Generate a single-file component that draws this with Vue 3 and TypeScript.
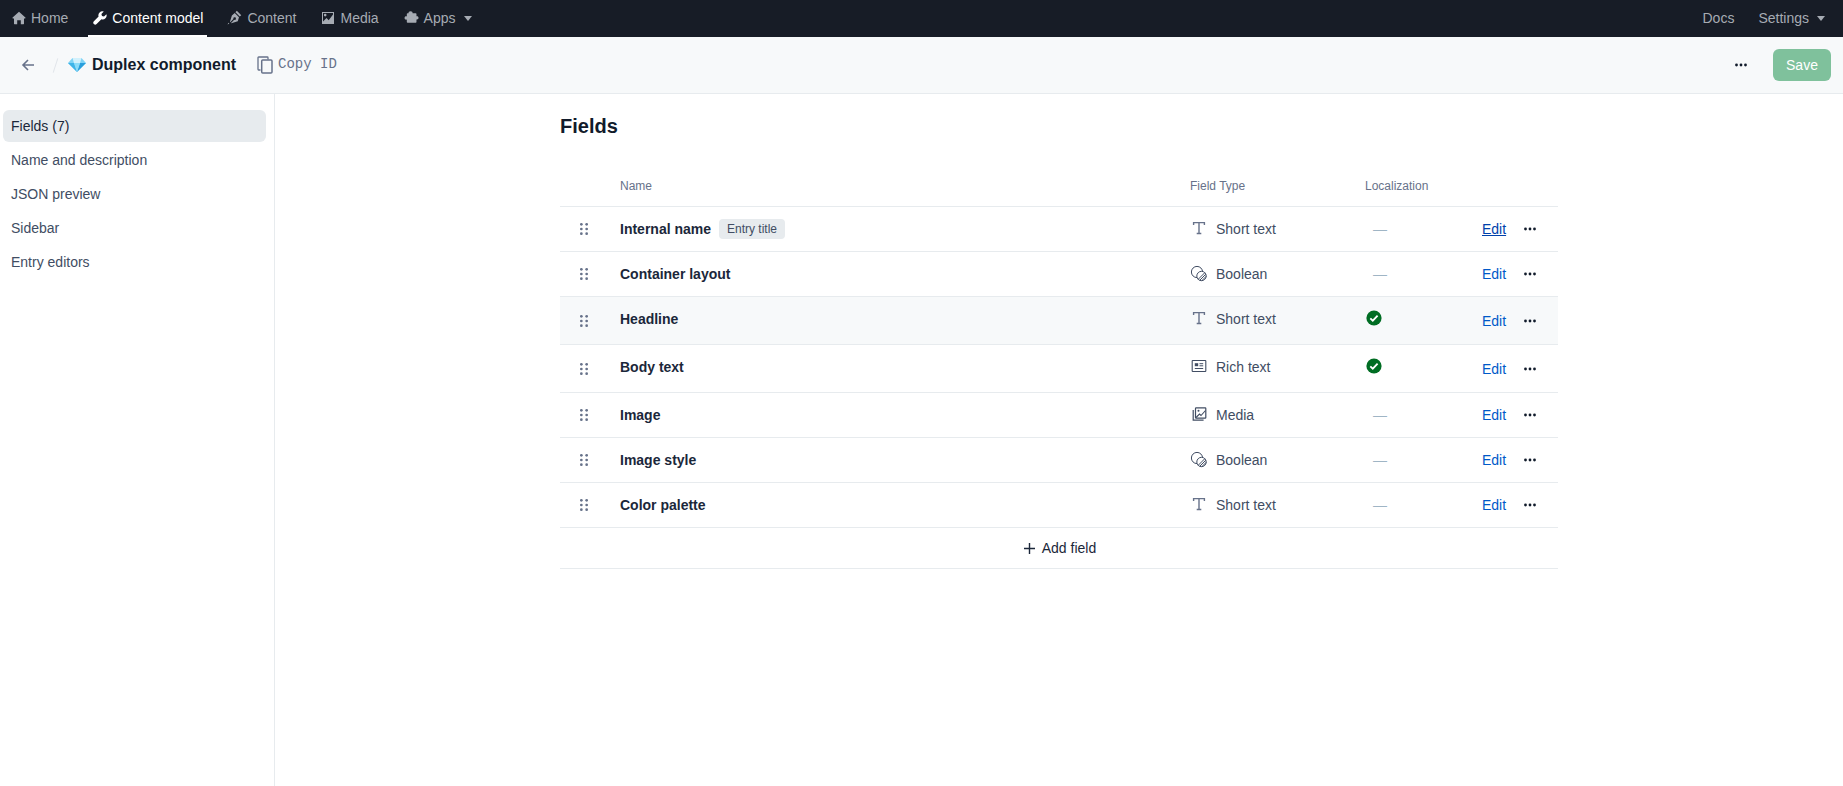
<script setup lang="ts">
type FieldKind = 'text' | 'bool' | 'rich' | 'media'
interface Field { name: string; kind: FieldKind; type: string; localized: boolean; tag?: string; link?: boolean }

const side: string[] = ['Fields (7)', 'Name and description', 'JSON preview', 'Sidebar', 'Entry editors']
const fields: Field[] = [
  { name: 'Internal name', kind: 'text', type: 'Short text', localized: false, tag: 'Entry title', link: true },
  { name: 'Container layout', kind: 'bool', type: 'Boolean', localized: false },
  { name: 'Headline', kind: 'text', type: 'Short text', localized: true },
  { name: 'Body text', kind: 'rich', type: 'Rich text', localized: true },
  { name: 'Image', kind: 'media', type: 'Media', localized: false },
  { name: 'Image style', kind: 'bool', type: 'Boolean', localized: false },
  { name: 'Color palette', kind: 'text', type: 'Short text', localized: false },
]
</script>

<template>
  <div class="app">
    <nav class="topnav">
      <a class="nav-item">
        <svg class="nav-ic" viewBox="0 0 14 14"><path d="M7 .8 .6 6.6c-.3.3-.1.8.3.8H2v5.4c0 .3.2.5.5.5h2.700V9.200h3.600v4.100h2.700c.3 0 .5-.2.5-.5V7.400h1.100c.4 0 .6-.5.3-.8z" /></svg>
        Home
      </a>
      <a class="nav-item active">
        <svg class="nav-ic" viewBox="0 0 14 14"><path d="M13.400 3.200 11 5.600 9 5 8.400 3 10.800.6a4 4 0 0 0-5.200 5L.9 10.300a1.900 1.900 0 0 0 2.700 2.700l4.800-4.700a4 4 0 0 0 5-5.100z" /></svg>
        Content model
      </a>
      <a class="nav-item">
        <svg class="nav-ic wide" viewBox="0 0 16 16"><path d="M10.500.8 15.200 5.500 13.600 7 9 2.400zM8.200 3.200l4.600 4.600-1.300 4.300-6.900 2.100-.3-.3 3.400-3.400a1.400 1.400 0 1 0-.9-.9l-3.400 3.400-.3-.3 2.100-6.900zM1.500 13.500l-.9 1.900 1.900-.9z" /></svg>
        Content
      </a>
      <a class="nav-item">
        <svg class="nav-ic" viewBox="0 0 14 14"><path fill-rule="evenodd" d="M1 1h12v12H1zm1 1v8.600L5.500 7l2.200 2.200L12 3.500V2zm2.200.8a1.300 1.300 0 1 1 0 2.600 1.300 1.300 0 0 1 0-2.600z" /></svg>
        Media
      </a>
      <a class="nav-item">
        <svg class="nav-ic wide" viewBox="0 0 16 16"><path d="M7 1.200c1.500 0 2.300 1 2.200 2.300h3.300c.5 0 .8.300.8.800v2.400c1.300-.4 2.200.4 2.200 1.600s-.9 2-2.200 1.700v2.700c0 .5-.3.800-.8.800H3.800c-.5 0-.8-.3-.8-.8V10.200C1.600 10.600.6 9.800.6 8.500S1.600 6.400 3 6.800V4.300c0-.5.300-.8.800-.8h1C4.700 2.200 5.500 1.200 7 1.200z" /></svg>
        Apps
        <i class="caret"></i>
      </a>
      <div class="nav-right">
        <a class="nav-item">Docs</a>
        <a class="nav-item">Settings <i class="caret"></i></a>
      </div>
    </nav>

    <header class="bar">
      <button class="back" aria-label="Back">
        <svg viewBox="0 0 14 14" width="14" height="14"><path d="M13 7H2M7 2 2 7l5 5" fill="none" stroke="#67728a" stroke-width="1.600" /></svg>
      </button>
      <span class="slash"></span>
      <svg class="gem" viewBox="0 0 18 14" width="18" height="14">
        <path d="M4.500 0h9L18 5 9 14 0 5z" fill="#7fd3f5" />
        <path d="M4.500 0 6 5h6l1.500-5z" fill="#d2f1fc" />
        <path d="M0 5h6l3 9z" fill="#3eb4e8" />
        <path d="M18 5h-6L9 14z" fill="#2a9fdc" />
        <path d="M6 5h6l-3 9z" fill="#8bdcf9" />
      </svg>
      <h1 class="title">Duplex component</h1>
      <span class="copy">
        <svg viewBox="0 0 16 18" width="16" height="18"><path d="M3.500 14H1.700a.8.8 0 0 1-.7-.8V1.800c0-.4.300-.8.700-.8h8.600c.4 0 .7.400.7.800V3.500" fill="none" stroke="#67728a" stroke-width="1.300" /><rect x="4.700" y="4" width="10.300" height="13" rx="1" fill="none" stroke="#67728a" stroke-width="1.500" /></svg>
        <code>Copy ID</code>
      </span>
      <span class="bar-right">
        <svg class="dots" viewBox="0 0 12 4" width="12" height="4"><circle cx="1.500" cy="2" r="1.400" /><circle cx="6" cy="2" r="1.400" /><circle cx="10.500" cy="2" r="1.400" /></svg>
        <button class="save">Save</button>
      </span>
    </header>

    <div class="body">
      <aside class="side">
        <a v-for="(s, i) in side" :key="s" class="side-item" :class="{ on: i === 0 }">{{ s }}</a>
      </aside>
      <main class="main">
        <h2 class="heading">Fields</h2>
        <div class="table">
          <div class="row head">
            <span></span><span>Name</span><span>Field Type</span><span>Localization</span><span></span>
          </div>
          <div v-for="(f, i) in fields" :key="f.name" class="row" :class="{ tall: f.localized, hover: i === 2 }">
            <span class="drag">
              <svg viewBox="0 0 8 12" width="8" height="12" fill="#67728a"><circle cx="1.350" cy="1.350" r="1.350" /><circle cx="6.650" cy="1.350" r="1.350" /><circle cx="1.350" cy="6" r="1.350" /><circle cx="6.650" cy="6" r="1.350" /><circle cx="1.350" cy="10.650" r="1.350" /><circle cx="6.650" cy="10.650" r="1.350" /></svg>
            </span>
            <span class="name">
              <b>{{ f.name }}</b>
              <em v-if="f.tag" class="tag">{{ f.tag }}</em>
            </span>
            <span class="type">
              <svg class="type-ic" viewBox="0 0 18 18" width="18" height="18">
                <path v-if="f.kind === 'text'" d="M3.600 6V3.600h10.800V6M9 3.600v10.800M6.700 14.500h4.600" fill="none" stroke="#67728a" stroke-width="1.400" />
                <g v-else-if="f.kind === 'bool'" fill="none" stroke="#414d63" stroke-width="1">
                  <circle cx="7" cy="8" r="5.600" />
                  <circle cx="11.500" cy="12" r="4.700" fill="#fff" />
                  <path d="M8.200 15.300l6.600-6.600M9.700 16.300l6.100-6.100M11.800 16.700l4.400-4.400" />
                </g>
                <g v-else-if="f.kind === 'rich'" fill="none" stroke="#414d63">
                  <rect x="2.200" y="3.500" width="13.600" height="11" rx=".6" stroke-width="1.100" />
                  <rect x="4.800" y="6.200" width="3.400" height="3" fill="#414d63" stroke="none" />
                  <path d="M4.800 11.500h8.400M9.500 6.700h3.700M9.500 8.800h3.700" stroke-width="1" />
                </g>
                <g v-else fill="none" stroke="#414d63" stroke-width="1.200">
                  <rect x="5.500" y="2.900" width="10.300" height="10.300" rx=".6" />
                  <path d="M3.200 5v10.100h10.400" />
                  <path d="M6 12.500l3.500-3.500 1.500 1.500 4.500-5" stroke-width="1.100" />
                  <circle cx="8.500" cy="5.700" r="1" fill="#414d63" stroke="none" />
                </g>
              </svg>
              {{ f.type }}
            </span>
            <span class="loc">
              <svg v-if="f.localized" class="check" viewBox="0 0 16 16" width="16" height="16"><circle cx="8" cy="8" r="7.600" fill="#006d23" /><path d="M4.300 8.300l2.500 2.400 4.800-5" fill="none" stroke="#fff" stroke-width="1.800" /></svg>
              <span v-else class="dash">—</span>
            </span>
            <span class="actions">
              <a class="edit" :class="{ under: f.link }">Edit</a>
              <svg class="dots" viewBox="0 0 12 4" width="12" height="4"><circle cx="1.500" cy="2" r="1.400" /><circle cx="6" cy="2" r="1.400" /><circle cx="10.500" cy="2" r="1.400" /></svg>
            </span>
          </div>
          <div class="add">
            <svg viewBox="0 0 11 11" width="11" height="11"><path d="M5.500 0v11M0 5.500h11" stroke="#1b273a" stroke-width="1.400" /></svg>
            Add field
          </div>
        </div>
      </main>
    </div>
  </div>
</template>

<style>
html, body { margin: 0; background: #fff; }
</style>

<style scoped>
.app { height: 786px; overflow: hidden; display: flex; flex-direction: column; font: 14px/20px "Liberation Sans", Arial, sans-serif; color: #414d63; }
.topnav { flex: 0 0 37px; box-sizing: border-box; height: 37px; background: #171c26; display: flex; gap: 15px; padding: 0 13px 0 7px; }
.nav-item { display: flex; align-items: center; gap: 5px; padding: 0 5px; height: 37px; box-sizing: border-box; color: #a6abb3; white-space: nowrap; border-bottom: 2px solid transparent; }
.nav-item.active { color: #fff; border-bottom-color: #fff; padding-right: 4px; }
.nav-ic { width: 14px; height: 14px; fill: currentColor; flex: none; }
.nav-ic.wide { width: 15px; height: 15px; }
.caret { width: 0; height: 0; margin-left: 3px; border: 4px solid transparent; border-top: 5px solid #a6abb3; border-bottom: 0; margin-top: 1px; }
.nav-right { margin-left: auto; display: flex; gap: 14px; }

.bar { flex: 0 0 57px; box-sizing: border-box; height: 57px; background: #f7f9fa; border-bottom: 1px solid #e7ebee; display: flex; align-items: center; padding: 0 12px 0 21px; }
.back { all: unset; display: flex; width: 14px; height: 14px; }
.slash { width: 1px; height: 15px; background: #e1e5ea; margin: 0 0 0 20px; transform: rotate(18deg); }
.gem { margin-left: 12px; }
.title { margin: 0 0 0 6px; font-size: 16px; line-height: 24px; font-weight: 700; color: #111b2b; white-space: nowrap; }
.copy { display: flex; align-items: center; gap: 5px; margin-left: 21px; }
.copy code { font: 14px/20px "Liberation Mono", monospace; color: #67728a; margin-top: -2px; }
.bar-right { margin-left: auto; display: flex; align-items: center; }
.dots { fill: #111b2b; flex: none; }
.save { all: unset; box-sizing: border-box; width: 58px; height: 32px; margin-left: 26px; border-radius: 6px; background: #7fc19c; color: #fff; text-align: center; line-height: 30px; }

.body { flex: 1; display: flex; min-height: 0; }
.side { flex: 0 0 275px; box-sizing: border-box; border-right: 1px solid #e7ebee; padding: 16px 8px 0 3px; display: flex; flex-direction: column; gap: 2px; }
.side-item { height: 32px; line-height: 32px; padding-left: 8px; border-radius: 6px; }
.side-item.on { background: #e7ebee; color: #1b273a; }

.main { flex: 0 0 998px; margin-left: 285px; }
.heading { margin: 20px 0 0; font-size: 20px; line-height: 24px; font-weight: 700; color: #111b2b; }
.row { display: grid; grid-template-columns: 60px 570px 175px 117px 76px; border-bottom: 1px solid #e7ebee; min-height: 44px; }
.row.head { font-size: 12px; line-height: 16px; color: #67728a; min-height: 0; padding: 40px 0 12px; }
.row.tall { min-height: 47px; }
.row.hover { background: #f7f9fa; }
.drag { padding-left: 20px; align-self: center; display: flex; }
.name { display: flex; align-items: center; gap: 8px; height: 20px; padding-top: 12px; color: #1b273a; }
.name b { font-weight: 700; }
.tag { font-style: normal; font-size: 12px; line-height: 20px; height: 20px; padding: 0 8px; background: #e7ebee; color: #414d63; border-radius: 4px; }
.type { display: flex; gap: 8px; padding-top: 12px; height: 20px; }
.type-ic { flex: none; }
.loc { padding-top: 12px; }
.check { display: block; margin: 1px 0 0 1px; }
.dash { padding-left: 8px; color: #9fb5c5; line-height: 20px; }
.actions { align-self: center; display: flex; align-items: center; gap: 18px; }
.edit { color: #0059c8; line-height: 20px; }
.edit.under { color: #0041ab; text-decoration: underline; }
.add { height: 40px; border-bottom: 1px solid #e7ebee; display: flex; align-items: center; justify-content: center; gap: 7px; padding-left: 2px; color: #1b273a; }
</style>
